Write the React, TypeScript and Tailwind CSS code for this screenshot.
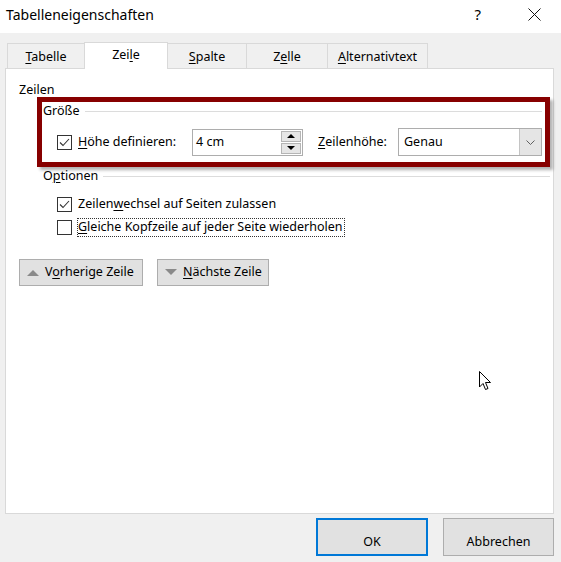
import type { ReactNode } from 'react';

const tabs = [
  { label: 'Tabelle', key: 'T', rest: 'abelle', pre: '', w: 'w-[78px]' },
  { label: 'Zeile', pre: 'Zei', key: 'l', rest: 'e', w: 'w-[84px]' },
  { label: 'Spalte', pre: '', key: 'S', rest: 'palte', w: 'w-[80px]' },
  { label: 'Zelle', pre: 'Z', key: 'e', rest: 'lle', w: 'w-[82px]' },
  { label: 'Alternativtext', pre: '', key: 'A', rest: 'lternativtext', w: 'w-[101px]' },
];

function Key({ pre = '', k, rest = '' }: { pre?: string; k: string; rest?: string }) {
  return (
    <span>
      {pre}
      <u className="underline underline-offset-[2px] decoration-1">{k}</u>
      {rest}
    </span>
  );
}

function CheckBox({ checked }: { checked?: boolean }) {
  return (
    <span className="w-[15px] h-[15px] border border-[#333333] bg-white flex items-center justify-center shrink-0">
      {checked && (
        <svg width="11" height="9" viewBox="0 0 11 9">
          <path d="M1 4.5 L4 7.5 L10 1" fill="none" stroke="#333333" strokeWidth="1.1" />
        </svg>
      )}
    </span>
  );
}

function GroupTitle({ children }: { children: ReactNode }) {
  return (
    <div className="flex items-center h-[14px]">
      <span className="leading-[14px]">{children}</span>
      <span className="flex-1 h-px bg-[#dcdcdc] ml-[5px]" />
    </div>
  );
}

function NavButton({ up, children, w }: { up?: boolean; children: ReactNode; w: string }) {
  return (
    <button className={`${w} h-[27px] bg-[#e1e1e1] border border-[#adadad] flex items-center pl-[7px] gap-[6px] text-black`}>
      <svg width="12" height="7" viewBox="0 0 12 7">
        {up ? <path d="M0 7 L6 1 L12 7 Z" fill="#8a8a8a" /> : <path d="M0 0 L12 0 L6 6 Z" fill="#8a8a8a" />}
      </svg>
      {children}
    </button>
  );
}

export default function App() {
  return (
    <div
      className="w-[561px] h-[562px] bg-[#f0f0f0] flex flex-col text-[12.5px] text-black relative overflow-hidden"
      style={{ fontFamily: '"Noto Sans", "Liberation Sans", sans-serif' }}
    >
      {/* title bar */}
      <div className="h-[33px] bg-white flex items-center pb-[4px] shrink-0">
        <span className="pl-[6px] text-[14px] leading-none">Tabelleneigenschaften</span>
        <span className="ml-auto text-[15px] leading-none mr-[47px]">?</span>
        <svg width="13" height="13" viewBox="0 0 13 13" className="mr-[20px]">
          <path d="M0.5 0.5 L12.5 12.5 M12.5 0.5 L0.5 12.5" stroke="#111" strokeWidth="1" />
        </svg>
      </div>

      {/* tabs */}
      <div className="flex items-end h-[27px] mt-[9px] ml-[7px] relative z-10">
        {tabs.map((t) =>
          t.label === 'Zeile' ? (
            <div
              key={t.label}
              className={`${t.w} h-[27px] -ml-px bg-white border border-b-0 border-[#d9d9d9] flex items-center justify-center pb-[1px]`}
            >
              <Key pre={t.pre} k={t.key} rest={t.rest} />
            </div>
          ) : (
            <div
              key={t.label}
              className={`${t.w} h-[25px] mb-px border border-b-0 border-[#d9d9d9] -ml-px first:ml-0 flex items-center justify-center pt-[2px]`}
            >
              <Key pre={t.pre} k={t.key} rest={t.rest} />
            </div>
          )
        )}
      </div>

      {/* panel */}
      <div className="ml-[5px] w-[549px] h-[446px] -mt-px bg-white border border-[#d9d9d9] flex flex-col shrink-0">
        <div className="pt-[14px] pl-[13px] h-[28px] leading-[14px]">Zeilen</div>

        {/* highlighted group */}
        <div className="ml-[31px] w-[513px] h-[70px] border-[5px] border-[#870000] shadow-[3px_3px_3px_rgba(0,0,0,0.3)] flex flex-col">
          <div className="pt-[2px] pl-[1px] pr-[3px]">
            <GroupTitle>Größe</GroupTitle>
          </div>
          <div className="flex items-center mt-[10px] h-[28px] pl-[15px]">
            <div className="w-[135px] flex items-center gap-[6px]">
              <CheckBox checked />
              <Key k="H" rest="öhe definieren:" />
            </div>
            <div className="w-[111px] h-[27px] border border-[#adadad] flex">
              <span className="flex-1 pl-[3px] flex items-center">4 cm</span>
              <div className="w-[22px] flex flex-col p-px gap-px">
                <div className="flex-1 bg-[#e6e6e6] border border-[#b5b5b5] flex items-center justify-center">
                  <svg width="8" height="4" viewBox="0 0 8 4"><path d="M0 4 L4 0 L8 4 Z" fill="#000" /></svg>
                </div>
                <div className="flex-1 bg-[#e6e6e6] border border-[#b5b5b5] flex items-center justify-center">
                  <svg width="8" height="4" viewBox="0 0 8 4"><path d="M0 0 L8 0 L4 4 Z" fill="#000" /></svg>
                </div>
              </div>
            </div>
            <div className="w-[95px] pl-[15px]">
              <Key k="Z" rest="eilenhöhe:" />
            </div>
            <div className="w-[144px] h-[28px] border border-[#adadad] flex">
              <span className="flex-1 pl-[5px] flex items-center">Genau</span>
              <span className="w-[22px] bg-[#e5e5e5] border-l border-[#c4c4c4] flex items-center justify-center">
                <svg width="9" height="5" viewBox="0 0 9 5"><path d="M0.5 0.5 L4.5 4.5 L8.5 0.5" fill="none" stroke="#606060" strokeWidth="1" /></svg>
              </span>
            </div>
          </div>
        </div>

        {/* Optionen */}
        <div className="mt-[2px] ml-[37px] w-[507px]">
          <GroupTitle>
            <Key pre="O" k="p" rest="tionen" />
          </GroupTitle>
        </div>
        <div className="mt-[10px] ml-[51px] flex flex-col">
          <div className="h-[23px] flex items-center gap-[6px]">
            <CheckBox checked />
            <Key pre="Zeilen" k="w" rest="echsel auf Seiten zulassen" />
          </div>
          <div className="h-[23px] flex items-center gap-[5px]">
            <CheckBox />
            <span className="border border-dotted border-[#333] h-[19px] flex items-center pr-px">
              <Key k="G" rest="leiche Kopfzeile auf jeder Seite wiederholen" />
            </span>
          </div>
        </div>

        <div className="mt-[20px] ml-[13px] flex gap-[14px]">
          <NavButton up w="w-[124px]">
            <Key pre="V" k="o" rest="rherige Zeile" />
          </NavButton>
          <NavButton w="w-[112px]">
            <Key k="N" rest="ächste Zeile" />
          </NavButton>
        </div>
      </div>

      {/* footer */}
      <div className="flex justify-end gap-[15px] mt-[4px] mr-[7px]">
        <button className="w-[112px] h-[38px] bg-[#e1e1e1] border-2 border-[#0078d7] text-black pt-[10px]">OK</button>
        <button className="w-[111px] h-[38px] bg-[#e1e1e1] border border-[#adadad] text-black pt-[10px]">Abbrechen</button>
      </div>

      {/* mouse pointer */}
      <svg width="14" height="21" viewBox="0 0 14 21" className="absolute left-[479px] top-[371px]">
        <path d="M0.5 0.5 L0.5 16 L4 12.5 L6.5 18.5 L9 17.5 L6.5 11.5 L11.5 11.5 Z" fill="#fff" stroke="#000" strokeWidth="1" strokeLinejoin="round" />
      </svg>
    </div>
  );
}
